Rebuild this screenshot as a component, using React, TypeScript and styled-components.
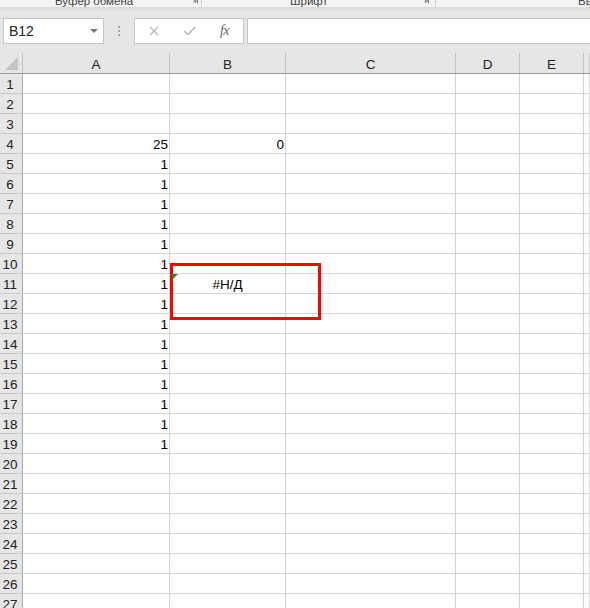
import React from 'react';
import styled, { createGlobalStyle } from 'styled-components';

const GlobalStyle = createGlobalStyle`
  html, body { margin: 0; padding: 0; background: #ffffff; overflow: hidden; }
  body { font-family: "Liberation Sans", Arial, sans-serif; }
  #root { width: 590px; height: 608px; }
`;

const Page = styled.div`
  width: 590px;
  height: 608px;
  overflow: hidden;
  background: #e6e6e6;
  display: flex;
  flex-direction: column;
`;

const RibbonStrip = styled.div`
  height: 7px;
  flex: none;
  background: #f3f3f3;
  overflow: hidden;
  display: flex;
`;

const RibbonGroup = styled.div<{ $w?: number; $pad: number }>`
  ${(p) => (p.$w ? `width: ${p.$w}px; flex: none;` : 'flex: 1;')}
  box-sizing: border-box;
  padding-left: ${(p) => p.$pad}px;
  display: flex;
  align-items: flex-start;
  border-right: ${(p) => (p.$w ? '1px solid #d2d2d2' : 'none')};
`;

const RibbonLabel = styled.span`
  margin-top: -6px;
  font-size: 11.5px;
  line-height: 14px;
  color: #444444;
  white-space: nowrap;
`;

const Launcher = styled.svg<{ $x: number }>`
  margin-left: auto;
  margin-right: ${(p) => p.$x}px;
  margin-top: -4px;
  flex: none;
`;

const FormulaBar = styled.div`
  height: 46px;
  flex: none;
  box-sizing: border-box;
  padding: 11px 0 0 3px;
  display: flex;
  align-items: flex-start;
  background: linear-gradient(#d9d9d9 0px, #e6e6e6 4px);
`;

const NameBox = styled.div`
  width: 101px;
  height: 26px;
  box-sizing: border-box;
  border: 1px solid #c6c6c6;
  background: #ffffff;
  display: flex;
  align-items: center;
  padding-left: 5px;
  font-size: 14px;
  line-height: 24px;
  color: #222222;
`;

const DropArrow = styled.span`
  margin-left: auto;
  margin-right: 5px;
  width: 0;
  height: 0;
  border-left: 4px solid transparent;
  border-right: 4px solid transparent;
  border-top: 4px solid #7a7a7a;
`;

const Grip = styled.div`
  width: 30px;
  height: 26px;
  flex: none;
  display: flex;
  flex-direction: column;
  align-items: center;
  justify-content: center;
  gap: 2px;
`;

const GripDot = styled.span`
  width: 2px;
  height: 2px;
  background: #a8a8a8;
`;

const ButtonsBox = styled.div`
  width: 110px;
  height: 26px;
  flex: none;
  box-sizing: border-box;
  border: 1px solid #c6c6c6;
  background: #ffffff;
  display: flex;
  align-items: center;
`;

const IconSlot = styled.div<{ $w: number }>`
  width: ${(p) => p.$w}px;
  display: flex;
  justify-content: center;
  align-items: center;
`;

const FxLabel = styled.span`
  font-family: "Liberation Serif", "Times New Roman", serif;
  font-style: italic;
  font-size: 14px;
  color: #666666;
  letter-spacing: -0.5px;
`;

const FormulaInput = styled.div`
  margin-left: 3px;
  flex: 1;
  height: 26px;
  box-sizing: border-box;
  border: 1px solid #c6c6c6;
  border-right: none;
  background: #ffffff;
`;

const GridArea = styled.div`
  position: relative;
  flex: 1;
  overflow: hidden;
  background: #ffffff;
`;

const COLS = '23px 147px 116px 170px 64px 64px 1fr';

const HeaderRow = styled.div`
  display: grid;
  grid-template-columns: ${COLS};
  height: 20px;
  border-bottom: 1px solid #9b9b9b;
  background: #e6e6e6;
`;

const HeaderCell = styled.div`
  border-right: 1px solid #c3c3c3;
  text-align: center;
  font-size: 13.5px;
  line-height: 23px;
  height: 20px;
  overflow: hidden;
  color: #222222;
`;

const Corner = styled.div`
  border-right: 1px solid #c3c3c3;
  display: flex;
  align-items: flex-end;
  justify-content: flex-end;
  padding: 0 4px 3px 0;
`;

const Row = styled.div`
  display: grid;
  grid-template-columns: ${COLS};
  height: 20px;
`;

const RowHead = styled.div`
  box-sizing: border-box;
  height: 20px;
  background: #e6e6e6;
  border-right: 1px solid #a8a8a8;
  border-bottom: 1px solid #c8c8c8;
  text-align: center;
  padding-right: 2px;
  font-size: 13.5px;
  line-height: 21px;
  color: #222222;
  overflow: hidden;
`;

const Cell = styled.div<{ $align?: 'right' | 'center' }>`
  position: relative;
  box-sizing: border-box;
  height: 20px;
  border-right: 1px solid #d4d4d4;
  border-bottom: 1px solid #d4d4d4;
  text-align: ${(p) => p.$align || 'left'};
  padding: 0 1px;
  font-size: 13.5px;
  line-height: 21px;
  color: #000000;
  overflow: hidden;
  white-space: nowrap;
`;

const ErrorMark = styled.span`
  position: absolute;
  left: 2px;
  top: 0;
  width: 0;
  height: 0;
  border-top: 6px solid #1f8a1f;
  border-right: 6px solid transparent;
  z-index: 2;
`;

const Highlight = styled.div`
  position: absolute;
  left: 170px;
  top: 210px;
  width: 151px;
  height: 57px;
  box-sizing: border-box;
  border: 3px solid #ff0000;
  pointer-events: none;
`;

const columns = ['A', 'B', 'C', 'D', 'E', ''];

const rowData: Record<number, { a?: string; b?: string; bErr?: string }> = {
  4: { a: '25', b: '0' },
};
for (let r = 5; r <= 19; r++) rowData[r] = { a: '1' };
rowData[11] = { a: '1', bErr: '#Н/Д' };

export default function App() {
  const rows = Array.from({ length: 28 }, (_, i) => i + 1);
  return (
    <>
      <GlobalStyle />
      <Page>
        <RibbonStrip>
          <RibbonGroup $w={202} $pad={55}>
            <RibbonLabel>Буфер обмена</RibbonLabel>
            <Launcher $x={3} width="8" height="8" viewBox="0 0 8 8">
              <path d="M0.5 0.5 H7.5 V7.5" fill="none" stroke="#777" strokeWidth="1" />
              <path d="M2 2 L6 6 M3.5 6 H6 V3.5" fill="none" stroke="#777" strokeWidth="1" />
            </Launcher>
          </RibbonGroup>
          <RibbonGroup $w={234} $pad={88}>
            <RibbonLabel>Шрифт</RibbonLabel>
            <Launcher $x={6} width="8" height="8" viewBox="0 0 8 8">
              <path d="M0.5 0.5 H7.5 V7.5" fill="none" stroke="#777" strokeWidth="1" />
              <path d="M2 2 L6 6 M3.5 6 H6 V3.5" fill="none" stroke="#777" strokeWidth="1" />
            </Launcher>
          </RibbonGroup>
          <RibbonGroup $pad={142}>
            <RibbonLabel>Выравнивание</RibbonLabel>
          </RibbonGroup>
        </RibbonStrip>

        <FormulaBar>
          <NameBox>
            B12
            <DropArrow />
          </NameBox>
          <Grip>
            <GripDot />
            <GripDot />
            <GripDot />
          </Grip>
          <ButtonsBox>
            <IconSlot $w={37}>
              <svg width="10" height="10" viewBox="0 0 10 10">
                <path d="M1 1 L9 9 M9 1 L1 9" stroke="#b5b5b5" strokeWidth="1.3" fill="none" />
              </svg>
            </IconSlot>
            <IconSlot $w={34}>
              <svg width="13" height="10" viewBox="0 0 13 10">
                <path d="M1 5 L5 8.5 L12 1" stroke="#b5b5b5" strokeWidth="1.6" fill="none" />
              </svg>
            </IconSlot>
            <IconSlot $w={37}>
              <FxLabel>fx</FxLabel>
            </IconSlot>
          </ButtonsBox>
          <FormulaInput />
        </FormulaBar>

        <GridArea>
          <HeaderRow>
            <Corner>
              <svg width="13" height="13" viewBox="0 0 13 13">
                <path d="M13 0 L13 13 L0 13 Z" fill="#c4c4c4" />
              </svg>
            </Corner>
            {columns.map((c, i) => (
              <HeaderCell key={i}>{c}</HeaderCell>
            ))}
          </HeaderRow>
          {rows.map((r) => {
            const d = rowData[r] || {};
            return (
              <Row key={r}>
                <RowHead>{r}</RowHead>
                <Cell $align="right">{d.a}</Cell>
                {d.bErr ? (
                  <Cell $align="center">
                    <ErrorMark />
                    {d.bErr}
                  </Cell>
                ) : (
                  <Cell $align="right">{d.b}</Cell>
                )}
                <Cell />
                <Cell />
                <Cell />
                <Cell />
              </Row>
            );
          })}
          <Highlight />
        </GridArea>
      </Page>
    </>
  );
}
